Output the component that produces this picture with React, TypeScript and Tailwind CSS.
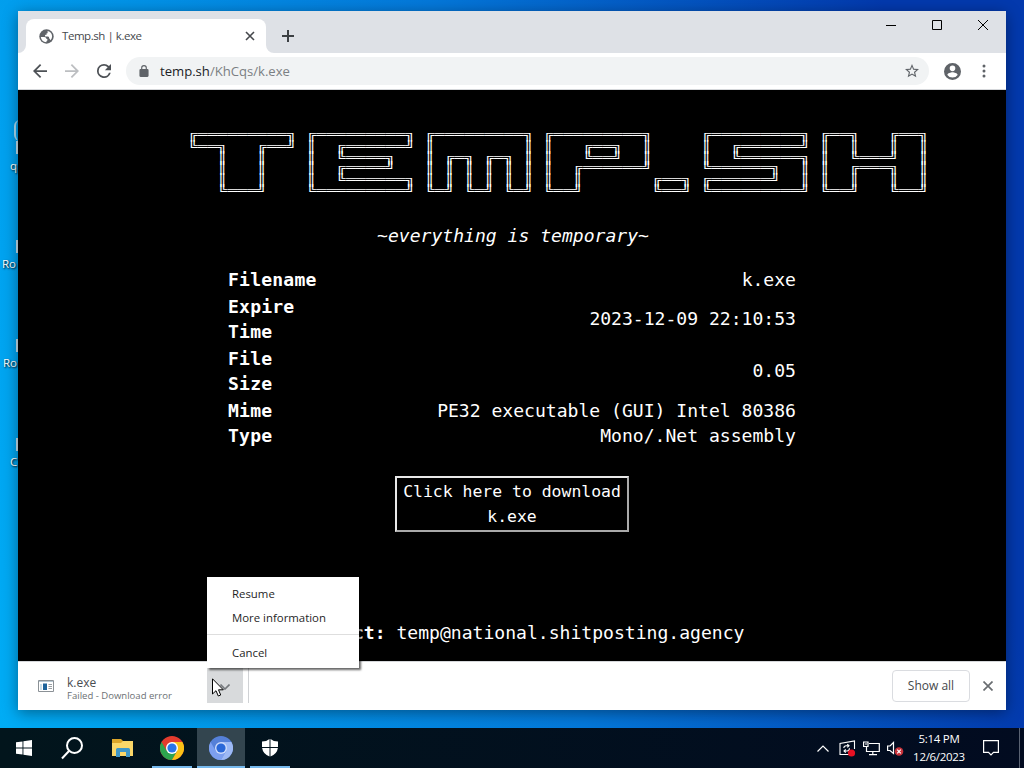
import type { ReactNode } from "react";

const banner = [
  "╔═════════╗ ╔═════════╗ ╔═════════╗ ╔═════════╗     ╔═════════╗ ╔══╗   ╔══╗",
  "╚══╗   ╔══╝ ║  ╔══════╝ ║         ║ ║   ╔══╗  ║     ║  ╔══════╝ ║  ║   ║  ║",
  "   ║   ║    ║  ╚════╗   ║ ╔═╗ ╔═╗ ║ ║   ╚══╝  ║     ║  ╚══════╗ ║  ╚═══╝  ║",
  "   ║   ║    ║  ╔════╝   ║ ║ ║ ║ ║ ║ ║  ╔══════╝     ╚══════╗  ║ ║  ╔═══╗  ║",
  "   ║   ║    ║  ╚══════╗ ║ ║ ║ ║ ║ ║ ║  ║       ╔══╗ ╔══════╝  ║ ║  ║   ║  ║",
  "   ╚═══╝    ╚═════════╝ ╚═╝ ╚═╝ ╚═╝ ╚══╝       ╚══╝ ╚═════════╝ ╚══╝   ╚══╝",
];

const ChromeLogo = ({ colors }: { colors: string[] }) => (
  <svg viewBox="0 0 24 24" className="h-6 w-6">
    <circle cx="12" cy="12" r="12" fill={colors[0]} />
    <path d="M1.6 6A12 12 0 0 0 12 24L17.2 15H12L6.8 15Z" fill={colors[1]} />
    <path d="M12 24A12 12 0 0 0 22.4 6H12L17.2 15Z" fill={colors[2]} />
    <circle cx="12" cy="12" r="6" fill={colors[4]} />
    <circle cx="12" cy="12" r="4.6" fill={colors[3]} />
  </svg>
);

const TabStrip = () => (
  <div className="flex h-[42px] items-end bg-[#dee1e6] pl-2">
    <div className="relative flex h-[34px] w-[240px] items-center rounded-t-lg bg-white pr-[11px] pl-[13px]">
      <svg viewBox="0 0 8 8" className="absolute bottom-0 -left-2 h-2 w-2 fill-white">
        <path d="M8 0V8H0A8 8 0 0 0 8 0Z" />
      </svg>
      <svg viewBox="0 0 8 8" className="absolute -right-2 bottom-0 h-2 w-2 fill-white">
        <path d="M0 0V8H8A8 8 0 0 1 0 0Z" />
      </svg>
      <svg viewBox="0 0 15 15" className="h-[15px] w-[15px]">
        <circle cx="7.5" cy="7.5" r="7.2" fill="#5f6368" />
        <path d="M1.8 8H5.2Q7.400 8 7.400 9.700Q8.800 9.900 8.500 11.200Q7.300 11.500 7.300 13.200Q2.500 12.800 1.800 8Z" fill="#fff" />
        <path d="M8.600 1.900Q13.200 2.800 13.100 7.800Q12.800 10 11.500 11.300Q10.900 9.800 10.200 9.500Q10.300 7.700 9 7.500H6.200Q5.600 6.500 6.500 5.700H7.600V4.300H8.600Z" fill="#fff" />
      </svg>
      <span className="ml-[8px] flex-1 text-[11.5px] tracking-[-0.45px] text-[#45484c]">
        Temp.sh | k.exe
      </span>
      <svg viewBox="0 0 10 10" className="h-[10px] w-[10px] stroke-[#45484c] stroke-[1.6]">
        <path d="M1 1L9 9M9 1L1 9" />
      </svg>
    </div>
    <svg viewBox="0 0 12 12" className="mb-[11px] ml-4 h-3 w-3 stroke-[#3c4043] stroke-2">
      <path d="M6 0V12M0 6H12" />
    </svg>
    <div className="mr-[18px] ml-auto flex h-full items-start gap-[36px] pt-[9px]">
      <svg viewBox="0 0 10 10" className="h-[10px] w-[10px] fill-none stroke-black">
        <path d="M0 5.500H10" />
      </svg>
      <svg viewBox="0 0 10 10" className="h-[10px] w-[10px] fill-none stroke-black">
        <path d="M.5.5H9.500V9.500H.5Z" />
      </svg>
      <svg viewBox="0 0 10 10" className="h-[10px] w-[10px] fill-none stroke-black">
        <path d="M0 0L10 10M10 0L0 10" />
      </svg>
    </div>
  </div>
);

const Toolbar = () => (
  <div className="flex h-[37px] items-center border-b border-[#d5d7da] bg-white pr-[20px] pl-[12px]">
    <svg viewBox="4 4 16 16" className="mr-[18px] ml-[3px] h-[14px] w-[14px] fill-[#4d5156]">
      <path d="M20 11H7.830l5.590-5.590L12 4l-8 8 8 8 1.410-1.410L7.830 13H20v-2z" />
    </svg>
    <svg viewBox="4 4 16 16" className="mr-[18px] h-[14px] w-[14px] fill-[#bcbec1]">
      <path d="M12 4l-1.410 1.410L16.170 11H4v2h12.170l-5.580 5.590L12 20l8-8z" />
    </svg>
    <svg viewBox="4 4 16 16" className="mr-[15px] h-[14px] w-[14px] fill-[#4d5156]">
      <path d="M17.650 6.350A7.960 7.960 0 0 0 12 4a8 8 0 1 0 7.730 10h-2.080A6 6 0 1 1 12 6c1.660 0 3.140.69 4.220 1.780L13 11h7V4l-2.350 2.350z" />
    </svg>
    <div className="flex h-7 flex-1 items-center rounded-full bg-[#f1f3f4] pr-[10px] pl-[13px]">
      <svg viewBox="4 1 16 21" className="h-3 w-[10px] fill-[#5f6368]">
        <path d="M18 8h-1V6A5 5 0 0 0 7 6v2H6a2 2 0 0 0-2 2v10c0 1.100.9 2 2 2h12a2 2 0 0 0 2-2V10a2 2 0 0 0-2-2ZM9 8V6a3 3 0 1 1 6 0v2Z" />
      </svg>
      <span className="mt-px ml-[11px] flex-1 text-[13.1px] text-[#7b7f83]">
        <span className="text-[#202124]">temp.sh</span>/KhCqs/k.exe
      </span>
      <svg viewBox="2 2 20 20" className="h-[14px] w-[14px] fill-[#5f6368]">
        <path d="M22 9.240l-7.190-.62L12 2 9.190 8.630 2 9.240l5.460 4.730L5.820 21 12 17.270 18.180 21l-1.630-7.030L22 9.240zM12 15.400l-3.760 2.270 1-4.280-3.320-2.880 4.380-.38L12 6.100l1.710 4.040 4.380.38-3.320 2.880 1 4.280L12 15.400z" />
      </svg>
    </div>
    <svg viewBox="2 2 20 20" className="ml-[15px] h-[17px] w-[17px] fill-[#5f6368]">
      <path d="M12 2a10 10 0 1 0 0 20 10 10 0 0 0 0-20Zm0 3a3.300 3.300 0 1 1 0 6.600A3.300 3.300 0 0 1 12 5Zm0 14.200a7.200 7.200 0 0 1-6-3.220c.03-1.990 4-3.080 6-3.080s5.970 1.090 6 3.080a7.200 7.200 0 0 1-6 3.220Z" />
    </svg>
    <svg viewBox="0 0 4 14" className="ml-[21px] h-[14px] w-1 fill-[#5f6368]">
      <circle cx="2" cy="2" r="1.500" />
      <circle cx="2" cy="7" r="1.500" />
      <circle cx="2" cy="12" r="1.500" />
    </svg>
  </div>
);

const Row = ({ label, children }: { label: ReactNode; children: ReactNode }) => (
  <div className="flex items-center justify-between pb-[2px]">
    <div className="font-bold tracking-[0.2px]">{label}</div>
    <div className="text-right">{children}</div>
  </div>
);

const TempPage = () => (
  <div className="flex h-[571px] flex-col items-center overflow-hidden bg-black font-['DejaVu_Sans_Mono',monospace] text-[18.07px] leading-[25px] text-white">
    <pre className="mt-[40px] -mb-[22px] ml-[170px] w-[745px] origin-top scale-y-75 self-start font-['Liberation_Mono',monospace] text-[16.47px] leading-[14.75px]">
      {banner.join("\n")}
    </pre>
    <div className="mt-[26px] ml-[2px] italic">~everything is temporary~</div>
    <div className="mt-[19px] w-[568px]">
      <Row label="Filename">k.exe</Row>
      <Row label={<>Expire<br />Time</>}>2023-12-09 22:10:53</Row>
      <Row label={<>File<br />Size</>}>0.05</Row>
      <Row label={<>Mime<br />Type</>}>
        PE32 executable (GUI) Intel 80386
        <br />
        Mono/.Net assembly
      </Row>
    </div>
    <button className="mt-[26px] h-[56px] w-[234px] border-2 border-[#e8e8e8] border-r-[#aaa] border-b-[#aaa] text-[16.45px]">
      Click here to download
      <br />
      k.exe
    </button>
    <div className="mt-[88px] w-[465px] text-right">
      <b>Contact:</b> temp@national.shitposting.agency
    </div>
  </div>
);

const DownloadShelf = () => (
  <div className="flex h-[49px] items-center border-t border-[#d5d7da] bg-white pr-[13px] pl-5">
    <svg viewBox="0 0 16 12" className="h-3 w-4">
      <path d="M.5.5H15.500V11.500H.5Z" fill="#fff" stroke="#8b9196" />
      <path d="M1 1.500H15" stroke="#b5c7d2" />
      <path d="M2 4H4V10H2Z" fill="#c9dfea" />
      <path d="M5 3.500H9V10H5Z" fill="#1d639b" />
      <path d="M10.500 4.500H14M10.500 6.500H14M10.500 8.500H14" stroke="#9aa0a4" />
    </svg>
    <div className="ml-[13px] w-[140px]">
      <div className="mt-[5px] text-[12px] leading-[14px] text-[#4a4d51]">k.exe</div>
      <div className="text-[9.550px] leading-[12px] text-[#6c7074]">Failed - Download error</div>
    </div>
    <div className="flex h-[41px] w-[36px] items-center justify-center self-start bg-[#d8dadc] pt-[9px]">
      <svg viewBox="0 0 10 6" className="h-[6px] w-[10px] fill-none stroke-[#74787c] stroke-[1.600]">
        <path d="M.5.5L5 5L9.500.5" />
      </svg>
    </div>
    <div className="ml-[5px] h-[41px] w-px self-start bg-[#d0d2d5]" />
    <div className="ml-auto flex h-8 w-[78px] items-center justify-center rounded border border-[#dadce0] text-[12px] text-[#45484c]">
      Show all
    </div>
    <svg viewBox="0 0 10 10" className="ml-[13px] h-[10px] w-[10px] stroke-[#696d71] stroke-[1.700]">
      <path d="M.5.5L9.500 9.500M9.500.5L.5 9.500" />
    </svg>
  </div>
);

const ContextMenu = () => (
  <div className="absolute top-[577px] left-[207px] h-[91px] w-[152px] bg-white text-[11.400px] leading-6 text-[#1f1f1f] shadow-[2px_2px_2px_#0009]">
    <div className="mt-[5px] pl-[25px]">Resume</div>
    <div className="pl-[25px]">More information</div>
    <div className="mt-1 border-t border-[#dedede] pt-[6px] pl-[25px]">Cancel</div>
  </div>
);

// only the left edge of each icon sticks out from behind the window
const desktopIcons = [
  { label: "q", position: "top-[142px] left-[10px]" },
  { label: "Ro", position: "top-[240px] left-[2px]" },
  { label: "Ro", position: "top-[339px] left-[3px]" },
  { label: "C", position: "top-[438px] left-[10px]" },
];

const Taskbar = () => (
  <div className="relative flex h-10 items-center bg-linear-to-r from-[#02151c] to-[#020b20] text-white">
    <div className="flex h-full w-12 items-center justify-center">
      <svg viewBox="0 0 16 16" className="h-4 w-4 fill-white">
        <path d="M0 2.300L6.500 1.400V7.500H0ZM7.400 1.300L16 0V7.500H7.400ZM0 8.400H6.500V14.600L0 13.700ZM7.400 8.400H16V16L7.400 14.700Z" />
      </svg>
    </div>
    <div className="flex h-full w-12 items-center justify-center">
      <svg viewBox="0 0 24 24" className="h-6 w-6 fill-none stroke-white stroke-2">
        <circle cx="14.500" cy="9.500" r="7.500" />
        <path d="M9 15L2 22.500" />
      </svg>
    </div>
    <div className="flex h-full w-[54px] items-center justify-center">
      <svg viewBox="0 0 22 18" className="h-[18px] w-[22px]">
        <path d="M0 0H9L11 2H21V17H0Z" fill="#dca62a" />
        <path d="M0 4H9L11 2H21V17H0Z" fill="#fbd768" />
        <path d="M4 18V10.500Q4 9 5.500 9H16.500Q18 9 18 10.500V18H14V13H8V18Z" fill="#3f97c8" />
      </svg>
    </div>
    <div className="ml-[2px] flex h-full w-10 items-center justify-center border-b-2 border-[#76b9ed] pt-[2px]">
      <ChromeLogo colors={["#e33b2e", "#2da44e", "#fbc116", "#2a75e8", "#fff"]} />
    </div>
    <div className="ml-[5px] flex h-full w-12 items-center justify-center border-b-2 border-[#76b9ed] bg-[#33454f] pt-[2px]">
      <ChromeLogo colors={["#5580d8", "#7c9ff0", "#9db9f5", "#2a68d8", "#cfdcfb"]} />
    </div>
    <div className="ml-[5px] flex h-full w-10 items-center justify-center border-b-2 border-[#76b9ed] pt-[2px]">
      <svg viewBox="0 0 18 18" className="h-[18px] w-[18px] fill-white">
        <path d="M8.500 0V8H1V2.500Q5.500 2.500 8.500 0ZM9.500 0Q12.500 2.500 17 2.500V8H9.500ZM1.100 9H8.500V17.500Q2 15 1.100 9ZM9.500 9H16.900Q16 15 9.500 17.500Z" />
      </svg>
    </div>
    <div className="ml-auto flex items-center">
      <svg viewBox="0 0 12 7" className="h-[7px] w-3 fill-none stroke-white stroke-[1.200]">
        <path d="M.5 6.500L6 1L11.500 6.500" />
      </svg>
      <svg viewBox="0 0 17 17" className="ml-[10px] h-[17px] w-[17px] fill-none stroke-white stroke-[1.100]">
        <path d="M11 14.500H1V3.500L15.500 1V9" />
        <path d="M4.800 8Q5 5.800 7.200 5.800H9.800M8.300 4.200L10 5.800L8.300 7.400M10.500 8.300Q10.200 11 8 11H5M6.700 9.300L5 11L6.700 12.600" />
        <circle cx="12.500" cy="13" r="3.600" className="fill-[#e81123] stroke-none" />
      </svg>
      <svg viewBox="0 0 17 15" className="ml-[7px] h-[15px] w-[17px] fill-none stroke-white stroke-[1.200]">
        <path d="M6 2.500H16.300V10.500H3.500V6M.6 1H5V5.500H.6ZM2 3H4M9.800 10.500V13.500M6 13.700H14" />
      </svg>
      <svg viewBox="0 0 17 15" className="ml-[7px] h-[15px] w-[17px] fill-none stroke-white stroke-[1.200]">
        <path d="M.6 5H3L6.500 1.500V12.500L3 9.500H.6Z" />
        <circle cx="12" cy="10.500" r="4.300" className="fill-[#c8323a] stroke-none" />
        <path d="M10.200 8.700L13.800 12.300M13.800 8.700L10.200 12.300" />
      </svg>
      <div className="ml-[7px] w-[56px] text-center text-[11.500px] leading-[18px] tracking-[-0.300px] whitespace-nowrap">
        5:14 PM
        <br />
        12/6/2023
      </div>
      <svg viewBox="0 0 16 16" className="ml-4 mr-[25px] h-4 w-4 fill-none stroke-white stroke-[1.200]">
        <path d="M.6.600H15.400V12.400H10.500L8 15L5.500 12.400H.6Z" />
      </svg>
    </div>
    <div className="absolute top-0 right-[4px] h-full w-px bg-[#5a6272]" />
  </div>
);

const App = () => {
  return (
    <div className="relative flex h-[768px] w-[1024px] flex-col overflow-hidden bg-[linear-gradient(78deg,#00adf5,#0478da_50%,#0339ad_88%)] font-['Open_Sans',sans-serif]">
      <div className="relative flex-1">
        <div className="absolute top-[120px] left-[14px] h-[21px] w-3 rounded-full border-l-2 border-[#a9d9ef]" />
        {desktopIcons.map(({ label, position }) => (
          <div key={position} className={`absolute w-4 ${position}`}>
            <span className="mt-[16px] block text-[11.500px] leading-4 text-white [text-shadow:1px_1px_2px_#000]">
              {label}
            </span>
          </div>
        ))}
        <div className="absolute top-[141px] left-[16px] flex flex-col gap-[86px]">
          {desktopIcons.map(({ position }) => (
            <div key={position} className="h-[13px] w-[2px] bg-[#c5dfec]" />
          ))}
        </div>
        <div className="absolute top-[11px] left-[18px] w-[988px] shadow-[0_3px_14px_#0006]">
          <TabStrip />
          <Toolbar />
          <TempPage />
          <DownloadShelf />
        </div>
        <ContextMenu />
        <svg viewBox="0 0 12 19" className="absolute top-[678px] left-[212px] h-[19px] w-3">
          <path d="M.5.800V16L4 12.700L6.300 18L8.700 17L6.500 11.800H11.300Z" fill="#fff" stroke="#000" />
        </svg>
      </div>
      <Taskbar />
    </div>
  );
};

export default App;
